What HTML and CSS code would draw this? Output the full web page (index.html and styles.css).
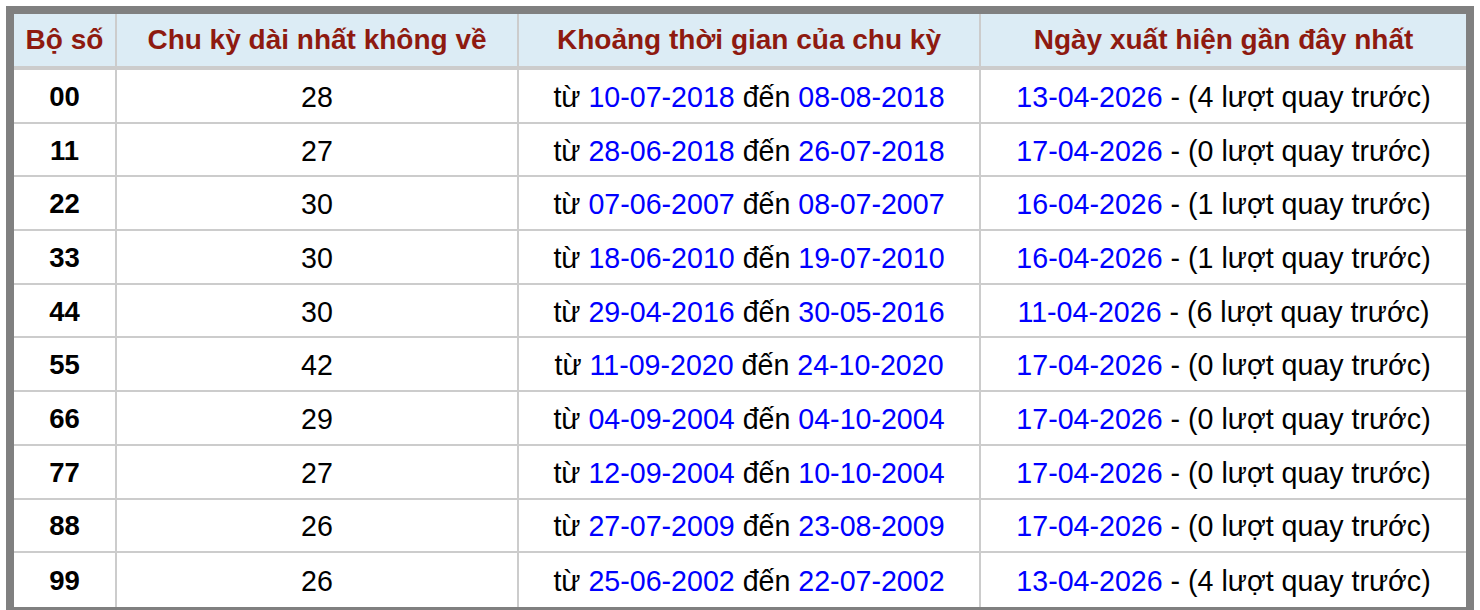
FILE: index.html
```html
<!DOCTYPE html>
<html lang="vi">
<head>
<meta charset="utf-8">
<title>Chu kỳ dài nhất không về</title>
<link rel="stylesheet" href="styles.css">
</head>
<body>
<table class="stats">
  <colgroup>
    <col class="c1"><col class="c2"><col class="c3"><col class="c4">
  </colgroup>
  <thead>
    <tr>
      <th>Bộ số</th>
      <th>Chu kỳ dài nhất không về</th>
      <th>Khoảng thời gian của chu kỳ</th>
      <th>Ngày xuất hiện gần đây nhất</th>
    </tr>
  </thead>
  <tbody>
    <tr><td class="num">00</td><td>28</td><td>từ <span class="d">10-07-2018</span> đến <span class="d">08-08-2018</span></td><td><span class="d">13-04-2026</span> - (4 lượt quay trước)</td></tr>
    <tr><td class="num">11</td><td>27</td><td>từ <span class="d">28-06-2018</span> đến <span class="d">26-07-2018</span></td><td><span class="d">17-04-2026</span> - (0 lượt quay trước)</td></tr>
    <tr><td class="num">22</td><td>30</td><td>từ <span class="d">07-06-2007</span> đến <span class="d">08-07-2007</span></td><td><span class="d">16-04-2026</span> - (1 lượt quay trước)</td></tr>
    <tr><td class="num">33</td><td>30</td><td>từ <span class="d">18-06-2010</span> đến <span class="d">19-07-2010</span></td><td><span class="d">16-04-2026</span> - (1 lượt quay trước)</td></tr>
    <tr><td class="num">44</td><td>30</td><td>từ <span class="d">29-04-2016</span> đến <span class="d">30-05-2016</span></td><td><span class="d">11-04-2026</span> - (6 lượt quay trước)</td></tr>
    <tr><td class="num">55</td><td>42</td><td>từ <span class="d">11-09-2020</span> đến <span class="d">24-10-2020</span></td><td><span class="d">17-04-2026</span> - (0 lượt quay trước)</td></tr>
    <tr><td class="num">66</td><td>29</td><td>từ <span class="d">04-09-2004</span> đến <span class="d">04-10-2004</span></td><td><span class="d">17-04-2026</span> - (0 lượt quay trước)</td></tr>
    <tr><td class="num">77</td><td>27</td><td>từ <span class="d">12-09-2004</span> đến <span class="d">10-10-2004</span></td><td><span class="d">17-04-2026</span> - (0 lượt quay trước)</td></tr>
    <tr><td class="num">88</td><td>26</td><td>từ <span class="d">27-07-2009</span> đến <span class="d">23-08-2009</span></td><td><span class="d">17-04-2026</span> - (0 lượt quay trước)</td></tr>
    <tr><td class="num">99</td><td>26</td><td>từ <span class="d">25-06-2002</span> đến <span class="d">22-07-2002</span></td><td><span class="d">13-04-2026</span> - (4 lượt quay trước)</td></tr>
  </tbody>
</table>
</body>
</html>
```

FILE: styles.css
```css
html, body {
  margin: 0;
  padding: 0;
  background: #ffffff;
}
body {
  padding: 6px;
  font-family: "Liberation Sans", Arial, Helvetica, sans-serif;
}
.stats {
  width: 1468px;
  table-layout: fixed;
  border-collapse: separate;
  border-spacing: 0;
  border: 8px solid #808080;
  font-size: 28.6px;
  line-height: 32px;
  color: #000;
}
.c1 { width: 103px; }
.c2 { width: 402px; }
.c3 { width: 462px; }
.c4 { width: 485px; }
.stats th,
.stats td {
  text-align: center;
  padding: 0;
  white-space: nowrap;
  border-right: 2px solid #cccccc;
  border-bottom: 2px solid #cccccc;
}
.stats th:last-child,
.stats td:last-child {
  border-right: 0;
}
.stats th {
  height: 52px;
  background: #dcecf5;
  color: #8e1a10;
  font-size: 28px;
  font-weight: bold;
  border-bottom: 4px solid #cccccc;
}
.stats td {
  box-sizing: border-box;
  height: 53.7px;
  padding-top: 2px;
}
.stats tbody tr:last-child td {
  border-bottom: 0;
}
.stats td.num {
  font-weight: bold;
  font-size: 27.5px;
}
.d {
  color: #0000ff;
}
```
